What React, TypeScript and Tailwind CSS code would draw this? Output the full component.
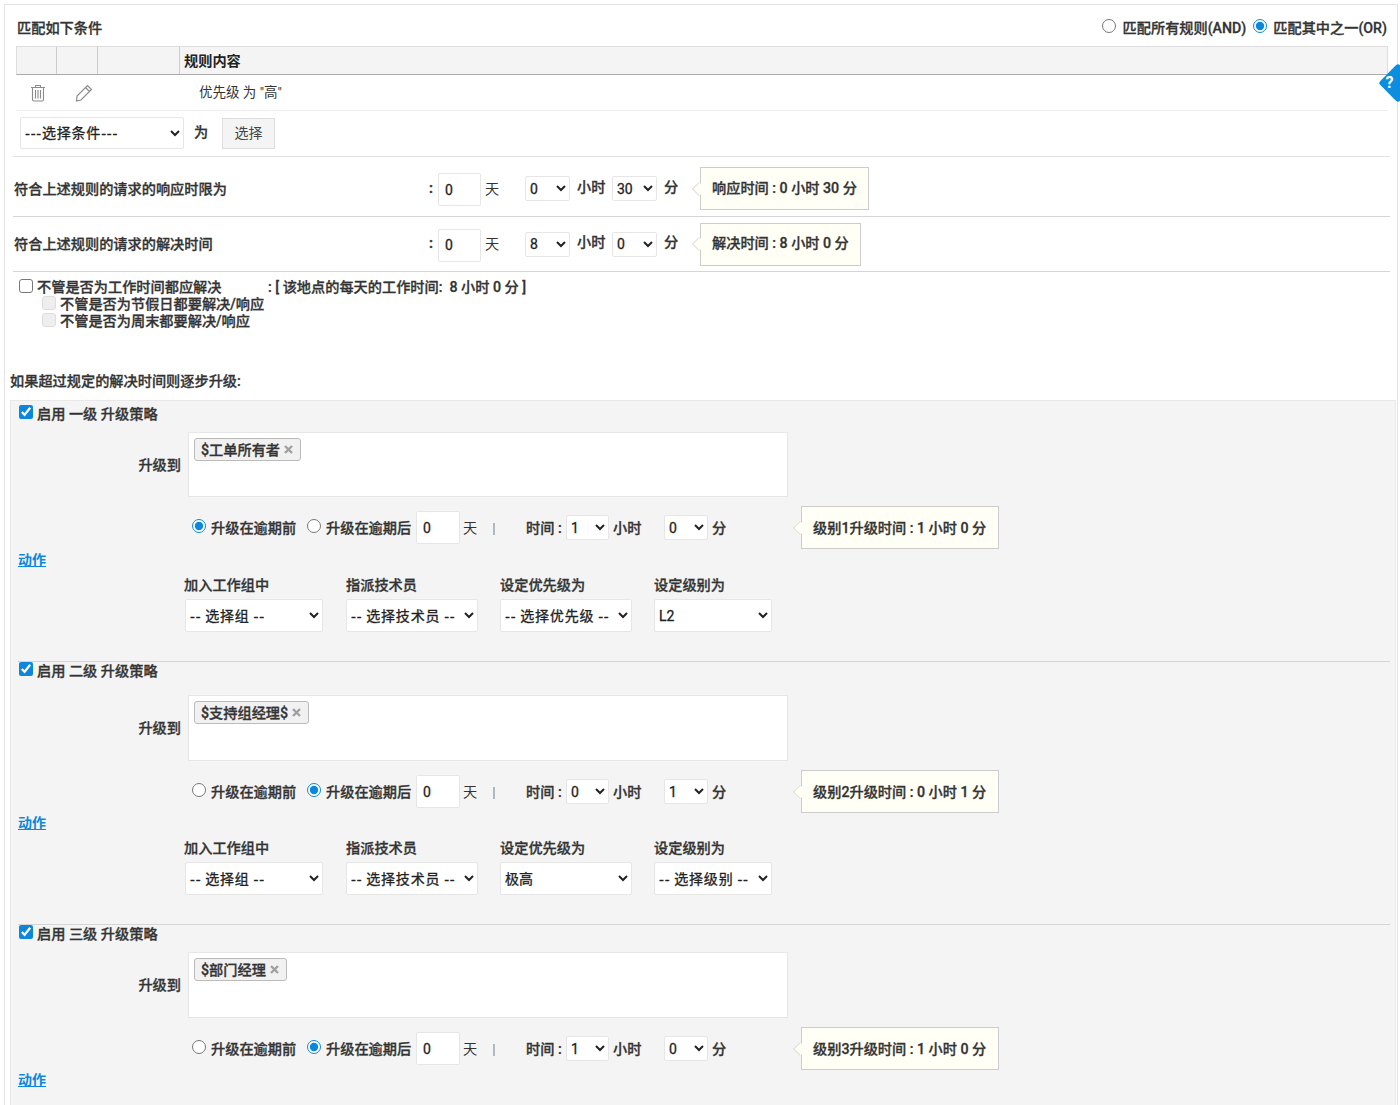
const med = "text-[14.2px] font-medium [-webkit-text-stroke:0.3px] text-[#333]";

const Sel = ({ value, className }: { value: string; className: string }) => (
  <select
    defaultValue={value}
    className={`rounded-[2px] border border-[#e6e6e6] bg-white text-[14px] font-normal text-[#222] [font-variant-ligatures:none] ${value.startsWith("-") ? "pb-[2px] font-['Noto_Sans_CJK_SC',sans-serif] tracking-[0.8px]" : ""} ${className}`}
  >
    <option>{value}</option>
  </select>
);

const DayInput = ({ className }: { className: string }) => (
  <input
    readOnly
    value="0"
    className={`rounded-[2px] border border-[#e6e6e6] bg-white pl-[6px] text-[14px] font-normal text-[#222] ${className}`}
  />
);

// yellow hint box with a small arrow on its left side
const Hint = ({ text, className }: { text: string; className: string }) => (
  <div className={`relative flex items-center border border-[#cccccc] bg-[#fffff5] px-[11px] ${med} ${className}`}>
    <span className="absolute left-[-7px] top-1/2 h-[10px] w-[10px] -translate-y-1/2 rotate-45 border-b border-l border-[#dddddd] bg-[#fffff5]" />
    <span className="relative">{text}</span>
  </div>
);

const Radio = ({ checked }: { checked?: boolean }) => (
  <input type="radio" readOnly checked={!!checked} className="m-0 h-[14px] w-[14px] -translate-y-[2px] accent-[#0b87dc]" />
);

const Cross = () => (
  <svg width="9" height="9" viewBox="0 0 9 9" stroke="#a0a0a0" strokeWidth="2.4" className="shrink-0">
    <path d="M1 1l7 7M8 1l-7 7" />
  </svg>
);

const TimeRow = ({ label, hours, mins, hint, hintW }: { label: string; hours: string; mins: string; hint: string; hintW: string }) => (
  <div className={`flex h-full items-center ${med}`}>
    <div className="w-[414px] shrink-0 pl-[1px] pt-[2px]">{label}</div>
    <span className="w-[11px] shrink-0 pl-[2px] font-bold">:</span>
    <DayInput className="mt-[2px] h-[33px] w-[43px] shrink-0" />
    <span className="ml-[4px] mt-[2px] w-[40px] shrink-0 font-normal [-webkit-text-stroke:0px]">天</span>
    <Sel value={hours} className="h-[25px] w-[45px] shrink-0" />
    <span className="ml-[7px] w-[35px] shrink-0 -translate-y-[1px]">小时</span>
    <Sel value={mins} className="h-[25px] w-[45px] shrink-0" />
    <span className="ml-[7px] w-[36px] shrink-0 -translate-y-[1px]">分</span>
    <Hint text={hint} className={`h-[43px] shrink-0 ${hintW}`} />
  </div>
);

type LevelProps = {
  name: string;
  tag: string;
  before: boolean;
  hours: string;
  mins: string;
  hint: string;
  headerH: string;
  boxH: string;
  actionH: string;
  line?: boolean;
  tagW: string;
  selects?: { priority: string; level: string };
};

const Level = ({ name, tag, before, hours, mins, hint, headerH, boxH, actionH, line, tagW, selects }: LevelProps) => (
  <div className={line ? "ml-[7px] mr-[5px] border-t border-[#d5d5d5]" : "ml-[7px] mr-[5px]"}>
    <div className={`flex items-start pl-[1px] ${med} ${headerH}`}>
      <label className={line ? "flex h-[18px] items-center" : "flex h-[20px] items-center"}>
        <input type="checkbox" readOnly checked className="m-0 h-[14px] w-[14px] -translate-y-[2px] accent-[#0b87dc]" />
        <span className="ml-[4px] pt-[2px]">启用 {name} 升级策略</span>
      </label>
    </div>

    <div className={`flex items-start ${boxH}`}>
      <div className={`w-[170px] shrink-0 pr-[7px] pt-[23px] text-right ${med}`}>升级到</div>
      <div className="h-full w-[600px] border border-[#e6e6e6] bg-white pl-[5px] pt-[5px]">
        <span className={`flex h-[23px] items-center justify-between rounded-[3px] border border-[#bbbbbb] bg-[#f1f1f1] pl-[6px] pr-[7px] ${med} ${tagW}`}>
          <span className="pt-[2px]">{tag}</span>
          <Cross />
        </span>
      </div>
    </div>

    <div className={`mt-[14px] flex h-[33px] items-center pl-[174px] [&>span]:pt-[2px] ${med}`}>
      <Radio checked={before} />
      <span className="ml-[5px] w-[96px] shrink-0">升级在逾期前</span>
      <Radio checked={!before} />
      <span className="ml-[5px] w-[90px] shrink-0">升级在逾期后</span>
      <DayInput className="h-[33px] w-[44px] shrink-0" />
      <span className="ml-[3px] w-[30px] shrink-0 font-normal [-webkit-text-stroke:0px]">天</span>
      <span className="w-[33px] shrink-0"><span className="block h-[12px] w-[2px] bg-[#b0b8c4]" /></span>
      <span className="w-[40px] shrink-0">时间 :</span>
      <Sel value={hours} className="h-[25px] w-[43px] shrink-0" />
      <span className="ml-[4px] w-[51px] shrink-0">小时</span>
      <Sel value={mins} className="h-[25px] w-[44px] shrink-0" />
      <span className="ml-[4px] w-[89px] shrink-0">分</span>
      <Hint text={hint} className="h-[43px] w-[198px] shrink-0 pt-[2px]" />
    </div>

    <div className={`flex items-center ${actionH}`}>
      <a className="text-[14px] font-bold text-[#0b87dc] underline">动作</a>
    </div>

    {selects && (
      <div className={`flex gap-[22px] pb-[29px] pl-[166px] ${med}`}>
        <div className="w-[140px]">
          <div className="h-[23px] leading-[18px]">加入工作组中</div>
          <Sel value="-- 选择组 --" className="ml-[1px] h-[33px] w-[138px]" />
        </div>
        <div className="w-[132px]">
          <div className="h-[23px] leading-[18px]">指派技术员</div>
          <Sel value="-- 选择技术员 --" className="h-[33px] w-[132px]" />
        </div>
        <div className="w-[132px]">
          <div className="h-[23px] leading-[18px]">设定优先级为</div>
          <Sel value={selects.priority} className="h-[33px] w-[132px]" />
        </div>
        <div className="w-[118px]">
          <div className="h-[23px] leading-[18px]">设定级别为</div>
          <Sel value={selects.level} className="h-[33px] w-[118px]" />
        </div>
      </div>
    )}
  </div>
);

export default function App() {
  return (
    <div className="relative h-[1105px] w-[1400px] overflow-hidden bg-white font-['Roboto','Noto_Sans_CJK_SC',sans-serif]">
      <div className="ml-[4px] mr-[2px] mt-[4px] h-[1101px] border-x border-t border-[#e4e4e4]">
        {/* match header */}
        <div className={`ml-[11px] flex h-[41px] w-[1372px] items-center justify-between pl-[1px] pr-[1px] pt-[5px] ${med}`}>
          <span className="pt-[2px]">匹配如下条件</span>
          <div className="flex items-center [&>span]:pt-[2px]">
            <span className="flex !pt-0"><Radio /></span>
            <span className="ml-[7px]">匹配所有规则(AND)</span>
            <span className="ml-[7px] flex !pt-0"><Radio checked /></span>
            <span className="ml-[6px]">匹配其中之一(OR)</span>
          </div>
        </div>

        {/* rule table */}
        <div className="ml-[11px] w-[1372px]">
          <div className="flex h-[29px] border border-b-[#aaaaaa] border-[#dddddd] bg-[#f4f4f4] text-[14.2px] font-bold text-[#222]">
            <div className="w-[40px] border-r border-[#cccccc]" />
            <div className="w-[41px] border-r border-[#cccccc]" />
            <div className="w-[82px] border-r border-[#cccccc]" />
            <div className="flex items-center pl-[4px] pt-[3px]">规则内容</div>
          </div>
          <div className="flex h-[36px] items-center border-b border-[#eeeeee] text-[13.5px] text-[#333]">
            <svg width="16" height="18" viewBox="0 0 16 18" fill="none" stroke="#8c8c8c" strokeWidth="1.1" className="ml-[14px] shrink-0">
              <path d="M1 3.500h14M5.500 3V1.500h5V3M2.500 4v11.500q0 1.500 1.500 1.500h8q1.500 0 1.500-1.500V4M5.500 6v8.500M8 6v8.500M10.500 6v8.500" />
            </svg>
            <svg width="18" height="18" viewBox="0 0 18 18" fill="none" stroke="#8c8c8c" strokeWidth="1.2" className="ml-[29px] shrink-0">
              <path d="M1.500 17l.5-5L12.500 1.500l4 4L6 16zM10.500 3.500l4 4" />
            </svg>
            <span className="ml-[106px]">优先级 为 "高"</span>
          </div>
        </div>

        {/* add condition */}
        <div className={`ml-[8px] flex h-[46px] w-[1377px] items-center border-b border-[#e2e2e2] pb-[1px] pl-[7px] ${med}`}>
          <Sel value="---选择条件---" className="h-[32px] w-[164px] shrink-0" />
          <span className="ml-[10px] w-[28px] shrink-0">为</span>
          <button className="h-[31px] w-[53px] shrink-0 border border-[#dddddd] bg-[#f4f4f4] text-[14px] font-normal text-[#444] [-webkit-text-stroke:0px]">选择</button>
        </div>

        {/* sla times */}
        <div className="ml-[8px] h-[60px] w-[1377px] border-b border-[#d5d5d5] pt-[4px]">
          <TimeRow label="符合上述规则的请求的响应时限为" hours="0" mins="30" hint="响应时间 : 0 小时 30 分" hintW="w-[169px]" />
        </div>
        <div className="ml-[8px] h-[55px] w-[1377px] border-b border-[#d5d5d5]">
          <TimeRow label="符合上述规则的请求的解决时间" hours="8" mins="0" hint="解决时间 : 8 小时 0 分" hintW="w-[161px]" />
        </div>

        {/* work hour options */}
        <div className={`pl-[14px] pt-[7px] leading-[17px] ${med}`}>
          <div className="flex h-[17px] items-center">
            <input type="checkbox" readOnly checked={false} className="m-0 h-[14px] w-[14px] -translate-y-[2px] appearance-none rounded-[3px] border border-[#777] bg-white" />
            <span className="ml-[4px] w-[231px] shrink-0">不管是否为工作时间都应解决</span>
            <span>: [ 该地点的每天的工作时间:&nbsp; 8 小时 0 分 ]</span>
          </div>
          <div className="flex h-[17px] items-center pl-[23px]">
            <input type="checkbox" disabled className="m-0 h-[14px] w-[14px] -translate-y-[2px] appearance-none rounded-[3px] border border-[#dddddd] bg-[#eeeeee]" />
            <span className="ml-[4px]">不管是否为节假日都要解决/响应</span>
          </div>
          <div className="flex h-[17px] items-center pl-[23px]">
            <input type="checkbox" disabled className="m-0 h-[14px] w-[14px] -translate-y-[2px] appearance-none rounded-[3px] border border-[#dddddd] bg-[#eeeeee]" />
            <span className="ml-[4px]">不管是否为周末都要解决/响应</span>
          </div>
        </div>

        <div className={`ml-[5px] mt-[42px] h-[28px] leading-[18px] ${med}`}>如果超过规定的解决时间则逐步升级:</div>

        {/* escalation levels */}
        <div className="ml-[5px] mr-[1px] h-[800px] border border-[#e8e8e8] bg-[#f4f4f4] pt-[3px]">
          <Level
            name="一级"
            tag="$工单所有者"
            tagW="w-[107px]"
            before
            hours="1"
            mins="0"
            hint="级别1升级时间 : 1 小时 0 分"
            headerH="h-[28px]"
            boxH="h-[65px]"
            actionH="h-[32px]"
            selects={{ priority: "-- 选择优先级 --", level: "L2" }}
          />
          <Level
            name="二级"
            tag="$支持组经理$"
            tagW="w-[115px]"
            line
            before={false}
            hours="0"
            mins="1"
            hint="级别2升级时间 : 0 小时 1 分"
            headerH="h-[33px]"
            boxH="h-[66px]"
            actionH="h-[31px]"
            selects={{ priority: "极高", level: "-- 选择级别 --" }}
          />
          <Level
            name="三级"
            tag="$部门经理"
            tagW="w-[93px]"
            line
            before={false}
            hours="1"
            mins="0"
            hint="级别3升级时间 : 1 小时 0 分"
            headerH="h-[27px]"
            boxH="h-[66px]"
            actionH="h-[31px]"
          />
        </div>
      </div>

      {/* help tab */}
      <div className="absolute left-[1384px] top-[69px] flex h-[28px] w-[28px] rotate-45 items-center justify-center rounded-[3px] bg-[#0b8ee0]">
        <span className="-rotate-45 -translate-x-[6px] translate-y-[6px] text-[16px] font-bold text-white">?</span>
      </div>
    </div>
  );
}
